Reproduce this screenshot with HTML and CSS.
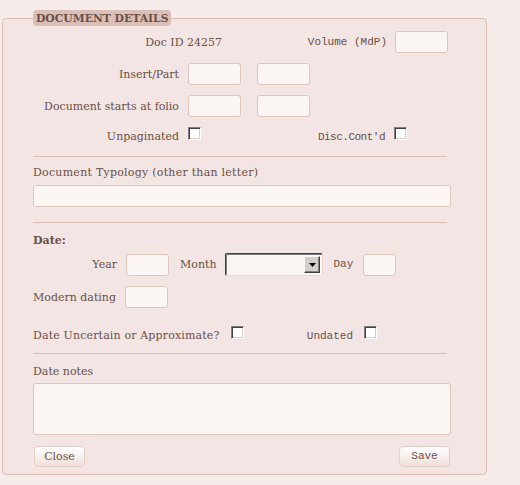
FILE: index.html
```html
<!DOCTYPE html>
<html>
<head>
<meta charset="utf-8">
<link rel="stylesheet" href="styles.css">
</head>
<body>
<fieldset class="panel">
  <legend class="panel-title">Document Details</legend>

  <div class="row row-first">
    <span class="cell cell-docid">Doc ID 24257</span>
    <span class="cell cell-volume mono">Volume (MdP)</span>
    <span class="field field-md gap-8"></span>
  </div>

  <div class="row row-next">
    <span class="cell cell-label">Insert/Part</span>
    <span class="field field-md gap-9"></span>
    <span class="field field-md gap-16"></span>
  </div>

  <div class="row row-next">
    <span class="cell cell-label">Document starts at folio</span>
    <span class="field field-md gap-9"></span>
    <span class="field field-md gap-16"></span>
  </div>

  <div class="row row-check row-unpag">
    <span class="cell cell-label">Unpaginated</span>
    <span class="check gap-9"></span>
    <span class="cell cell-disc mono">Disc.Cont'd</span>
    <span class="check gap-9"></span>
  </div>

  <hr class="rule rule-1">

  <div class="label label-typology">Document Typology (other than letter)</div>
  <div class="field field-wide field-typology"></div>

  <hr class="rule rule-2">

  <div class="label label-bold label-date">Date:</div>

  <div class="row row-date">
    <span class="cell cell-year">Year</span>
    <span class="field field-sm gap-9"></span>
    <span class="cell gap-11">Month</span>
    <span class="select gap-9"><span class="select-btn"><svg width="7" height="4" viewBox="0 0 7 4"><path d="M0 0h7L3.5 4z" fill="#000"/></svg></span></span>
    <span class="cell mono gap-10">Day</span>
    <span class="field field-xs gap-10"></span>
  </div>

  <div class="row row-modern">
    <span class="cell">Modern dating</span>
    <span class="field field-sm gap-9"></span>
  </div>

  <div class="row row-check row-uncertain">
    <span class="cell cell-uncertain">Date Uncertain or Approximate?</span>
    <span class="check gap-11"></span>
    <span class="cell cell-undated mono">Undated</span>
    <span class="check gap-11"></span>
  </div>

  <hr class="rule rule-3">

  <div class="label label-notes">Date notes</div>
  <div class="field field-wide field-notes"></div>

  <div class="actions">
    <button class="btn" type="button">Close</button>
    <button class="btn mono" type="button">Save</button>
  </div>
</fieldset>
</body>
</html>
```
FILE: styles.css
```css
html, body {
  margin: 0;
  padding: 0;
  background: #f6ecea;
}

body {
  font-family: "DejaVu Serif", "Liberation Serif", serif;
  font-size: 11px;
  line-height: 13px;
  color: #6b5047;
}

.mono {
  font-family: "Liberation Mono", "DejaVu Sans Mono", monospace;
}

.panel {
  box-sizing: border-box;
  width: 485px;
  height: 465px;
  margin: 10px 0 0 2px;
  padding: 5px 30px 0 30px;
  border: 1px solid #dcbdb5;
  border-radius: 4px;
  background: #f2e5e3;
}

.panel-title {
  padding: 2px 3px 1px 3px;
  background: #dbbfb7;
  border-radius: 4px;
  font-weight: bold;
  font-size: 10.8px;
  line-height: 13px;
  text-transform: uppercase;
  color: #6b5047;
}

.row {
  display: flex;
  align-items: center;
}

.row-check {
  align-items: baseline;
}

.row-first { margin-top: 0; }
.row-next { margin-top: 10px; }
.row-unpag { margin-top: 10px; }

.cell { white-space: nowrap; }

.cell-docid { width: 189px; text-align: right; }
.cell-volume { width: 165px; text-align: right; }
.cell-label { width: 146px; text-align: right; }
.cell-disc { width: 184px; text-align: right; letter-spacing: -0.5px; }
.cell-year { width: 84px; text-align: right; }
.cell-uncertain { width: 187px; letter-spacing: 0.15px; }
.cell-undated { width: 109px; text-align: right; }

.gap-8 { margin-left: 8px; }
.gap-9 { margin-left: 9px; }
.gap-10 { margin-left: 10px; }
.gap-11 { margin-left: 11px; }
.gap-16 { margin-left: 16px; }

.field {
  box-sizing: border-box;
  display: block;
  height: 22px;
  background: #fbf6f4;
  border: 1px solid #e0c5bd;
  border-radius: 3px;
}

.field-md { width: 53px; }
.field-sm { width: 43px; }
.field-xs { width: 33px; }
.field-wide { width: 418px; }

.check {
  box-sizing: border-box;
  display: inline-block;
  width: 13px;
  height: 13px;
  background: #fff;
  border: 1px solid;
  border-color: #808080 #fff #fff #808080;
  box-shadow: inset 1px 1px 0 #404040, inset -1px -1px 0 #d4d0c8;
}

.rule {
  width: 414px;
  height: 0;
  margin: 0;
  border: 0;
  border-top: 1px solid #dcbdb5;
}

.rule-1 { margin-top: 12px; }
.label-typology { margin-top: 9px; letter-spacing: 0.25px; }
.field-typology { margin-top: 6px; }
.rule-2 { margin-top: 15px; }
.label-date { margin-top: 11px; }
.label-bold { font-weight: bold; }
.row-date { margin-top: 6px; }
.row-modern { margin-top: 10px; }
.row-uncertain { margin-top: 18px; }
.rule-3 { margin-top: 10px; }
.label-notes { margin-top: 11px; }
.field-notes { margin-top: 5px; height: 52px; }

.select {
  box-sizing: border-box;
  display: flex;
  justify-content: flex-end;
  align-items: center;
  width: 98px;
  height: 23px;
  padding-right: 2px;
  background: #fbf6f4;
  border: 1px solid;
  border-color: #404040 #e8d8d2 #e8d8d2 #404040;
  box-shadow: inset 1px 1px 0 #808080;
  border-radius: 2px;
}

.select-btn {
  box-sizing: border-box;
  display: flex;
  align-items: center;
  justify-content: center;
  width: 16px;
  height: 17px;
  background: #d4d0c8;
  border: 1px solid;
  border-color: #fff #404040 #404040 #fff;
  box-shadow: inset -1px -1px 0 #808080;
}

.actions {
  display: flex;
  justify-content: space-between;
  width: 416px;
  margin-top: 11px;
  padding-left: 1px;
}

.btn {
  box-sizing: border-box;
  width: 51px;
  height: 21px;
  padding: 0;
  border: 1px solid #e6cec6;
  border-radius: 4px;
  background: linear-gradient(#ffffff, #f0dfd9);
  color: #6b5047;
  font-size: 11px;
  line-height: 13px;
}

.btn:not(.mono) {
  font-family: "DejaVu Serif", "Liberation Serif", serif;
}
```
